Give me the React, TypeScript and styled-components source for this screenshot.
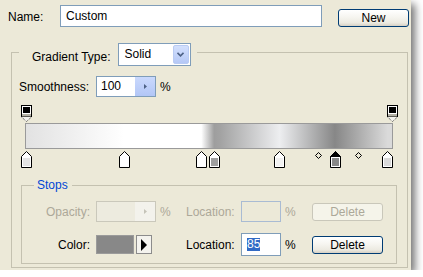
import React from 'react';
import styled, { createGlobalStyle } from 'styled-components';

const Global = createGlobalStyle`
  html, body { margin: 0; padding: 0; background: #ffffff; }
  body { font-family: 'Liberation Sans', Arial, sans-serif; font-size: 12px; }
`;

const FONT = `'Liberation Sans', Arial, sans-serif`;

const Dialog = styled.div`
  width: 411px;
  height: 270px;
  box-sizing: border-box;
  padding-top: 5px;
  background: #ece9d8;
  box-shadow: 4px 4px 8px rgba(0, 0, 0, 0.55);
  display: flex;
  flex-direction: column;
  color: #000;
  font-family: ${FONT};
  font-size: 12px;
`;

const NameRow = styled.div`
  display: flex;
  align-items: flex-start;
  height: 22px;
  padding-left: 8px;
`;

const NameLabel = styled.label`
  width: 52px;
  line-height: 22px;
  padding-top: 1px;
`;

const TextField = styled.div`
  width: 262px;
  height: 22px;
  box-sizing: border-box;
  border: 1px solid #7f9db9;
  background: #fff;
  padding-left: 5px;
  line-height: 20px;
`;

const Button = styled.div<{ $disabled?: boolean; $offset?: number }>`
  width: 71px;
  height: 18px;
  box-sizing: border-box;
  margin-left: ${p => p.$offset ?? 0}px;
  margin-top: ${p => (p.$offset ? 4 : 0)}px;
  border: 1px solid ${p => (p.$disabled ? '#c9c7ba' : '#003c74')};
  border-radius: 3px;
  background: ${p =>
    p.$disabled
      ? '#f5f4ea'
      : 'linear-gradient(#ffffff 0%, #f6f5f0 45%, #eceae1 80%, #d6d0c4 100%)'};
  color: ${p => (p.$disabled ? '#aca899' : '#000')};
  display: flex;
  align-items: center;
  justify-content: center;
  line-height: 16px;
`;

const Group = styled.fieldset`
  margin: 16px 0 0 11px;
  width: 397px;
  height: 225px;
  box-sizing: border-box;
  border: 1px solid #c4c1b0;
  padding: 0 0 0 7px;
  min-width: 0;
`;

const GroupLegend = styled.legend`
  padding: 0 6px 0 13px;
  height: 18px;
  box-sizing: border-box;
`;

const LegendRow = styled.div`
  display: flex;
  align-items: flex-start;
  height: 18px;
`;

const LegendLabel = styled.span`
  margin-top: 7px;
  line-height: 14px;
  white-space: nowrap;
`;

const Select = styled.div`
  margin-left: 7px;
  width: 73px;
  height: 23px;
  box-sizing: border-box;
  border: 1px solid #7f9db9;
  background: #fff;
  padding: 1px;
  display: flex;
  flex-shrink: 0;
`;

const SelectValue = styled.div`
  flex: 1;
  padding-left: 5px;
  line-height: 19px;
`;

const SelectButton = styled.div`
  width: 16px;
  box-sizing: border-box;
  border: 1px solid #b9cbf3;
  border-radius: 2px;
  background: linear-gradient(#d3e0fd, #b5c8f6);
  display: flex;
  align-items: center;
  justify-content: center;
`;

const SmoothRow = styled.div`
  display: flex;
  align-items: center;
  height: 21px;
  margin-top: 15px;
`;

const SmoothLabel = styled.span`
  width: 77px;
  white-space: nowrap;
`;

const Spin = styled.div<{ $disabled?: boolean }>`
  display: flex;
  width: 60px;
  height: 21px;
  box-sizing: border-box;
  border: 1px solid ${p => (p.$disabled ? '#cac8bb' : '#7f9db9')};
  background: ${p => (p.$disabled ? '#edebdf' : '#fff')};
`;

const SpinValue = styled.div`
  flex: 1;
  padding-left: 4px;
  line-height: 19px;
`;

const SpinButton = styled.div<{ $disabled?: boolean }>`
  width: 20px;
  display: flex;
  align-items: center;
  justify-content: center;
  background: ${p => (p.$disabled ? '#f3f2ec' : 'linear-gradient(#cad9fd, #b2c6f6)')};
`;

const Percent = styled.span<{ $disabled?: boolean; $width: number }>`
  width: ${p => p.$width}px;
  padding-left: 4px;
  box-sizing: border-box;
  color: ${p => (p.$disabled ? '#aca899' : '#000')};
`;

const Strip = styled.div`
  width: 381px;
  display: flex;
  flex-direction: column;
`;

const Track = styled.div<{ $top: number }>`
  position: relative;
  height: 17px;
  margin-top: ${p => p.$top}px;
`;

const Marker = styled.div`
  position: absolute;
  top: 0;
  width: 11px;
  height: 17px;
  line-height: 0;
`;

const Diamond = styled.div`
  position: absolute;
  top: 1px;
  width: 7px;
  height: 7px;
  line-height: 0;
`;

const Bar = styled.div`
  margin: 1px 0 0 6px;
  width: 368px;
  height: 26px;
  box-sizing: border-box;
  border: 1px solid #9a9a9a;
  background: linear-gradient(
    to right,
    #e2e2e2 0%,
    #ffffff 26.8%,
    #ffffff 47.9%,
    #9e9e9e 51.4%,
    #a2a2a2 53%,
    #edeef0 69.3%,
    #878787 84.4%,
    #dadada 98.8%,
    #dadada 100%
  );
`;

const StopsGroup = styled.fieldset`
  margin: 10px 0 0 2px;
  width: 376px;
  height: 86px;
  box-sizing: border-box;
  border: 1px solid #c4c1b0;
  padding: 0 0 7px 0;
  min-width: 0;
`;

const StopsLegend = styled.legend`
  margin-left: 12px;
  padding: 0 4px 0 3px;
  line-height: 14px;
  height: 14px;
  color: #0046d5;
`;

const FieldRow = styled.div<{ $top: number; $height: number }>`
  display: flex;
  align-items: center;
  margin-top: ${p => p.$top}px;
  height: ${p => p.$height}px;
`;

const FieldLabel = styled.span<{ $disabled?: boolean }>`
  width: 68px;
  margin-right: 6px;
  text-align: right;
  white-space: nowrap;
  color: ${p => (p.$disabled ? '#aca899' : '#000')};
`;

const LocationLabel = styled.span<{ $disabled?: boolean }>`
  width: 49px;
  margin-right: 6px;
  white-space: nowrap;
  color: ${p => (p.$disabled ? '#aca899' : '#000')};
`;

const LocationField = styled.div<{ $disabled?: boolean; $height: number }>`
  width: 40px;
  height: ${p => p.$height}px;
  box-sizing: border-box;
  border: 1px solid ${p => (p.$disabled ? '#a9bbd3' : '#7f9db9')};
  background: ${p => (p.$disabled ? '#ece9d8' : '#fff')};
  padding-left: 5px;
  display: flex;
  align-items: center;
`;

const Selected = styled.span`
  display: inline-block;
  background: #316ac5;
  color: #fff;
  line-height: 13px;
  height: 13px;
`;

const ColorControl = styled.div`
  display: flex;
  width: 60px;
  gap: 2px;
`;

const Swatch = styled.div<{ $color: string }>`
  width: 38px;
  height: 19px;
  box-sizing: border-box;
  border: 1px solid #9b9b9b;
  background: ${p => p.$color};
`;

const ArrowButton = styled.div`
  width: 16px;
  height: 19px;
  box-sizing: border-box;
  border: 1px solid #8c8c8c;
  background: #f4f3ee;
  display: flex;
  align-items: center;
  justify-content: center;
`;

const Chevron = () => (
  <svg width="7" height="5" viewBox="0 0 7 5">
    <path d="M0.5 0.8 L3.5 3.8 L6.5 0.8" fill="none" stroke="#4d6185" strokeWidth="1.6" />
  </svg>
);

const SmallRight = ({ color }: { color: string }) => (
  <svg width="3" height="5" viewBox="0 0 3 5">
    <path d="M0 0 L3 2.5 L0 5 Z" fill={color} />
  </svg>
);

const BigRight = () => (
  <svg width="6" height="12" viewBox="0 0 6 12">
    <path d="M0 0 L6 6 L0 12 Z" fill="#000" />
  </svg>
);

const OpacityStopIcon = () => (
  <svg width="11" height="17" viewBox="0 0 11 17">
    <rect x="0.5" y="0.5" width="10" height="11" fill="#fff" stroke="#000" />
    <rect x="2" y="2" width="7" height="6" fill="#000" />
    <rect x="1" y="9" width="9" height="2.5" fill="#b4b2a6" />
    <path d="M0.5 12 L5.5 16.5 L10.5 12" fill="#f4f3ee" stroke="#444" strokeDasharray="1 1" />
  </svg>
);

const ColorStopIcon = ({ color, selected }: { color: string; selected?: boolean }) => (
  <svg width="11" height="17" viewBox="0 0 11 17">
    <path d="M5.5 0.5 L10.5 5.5 V16.5 H0.5 V5.5 Z" fill="#fff" stroke="#000" />
    {selected && <path d="M5.5 0.5 L10.5 5.5 H0.5 Z" fill="#000" stroke="#000" />}
    <rect x="2" y="7" width="7" height="8" fill={color} />
  </svg>
);

const MidpointIcon = () => (
  <svg width="7" height="7" viewBox="0 0 7 7">
    <path d="M3.5 0.5 L6.5 3.5 L3.5 6.5 L0.5 3.5 Z" fill="none" stroke="#000" />
  </svg>
);

type Stop = { center: number; color: string; selected?: boolean };

const opacityStops = [7.5, 373];
const colorStops: Stop[] = [
  { center: 7.5, color: '#e4e4e4' },
  { center: 105, color: '#ffffff' },
  { center: 182.5, color: '#ffffff' },
  { center: 195, color: '#9e9e9e' },
  { center: 260.5, color: '#f2f2f2' },
  { center: 316, color: '#888888', selected: true },
  { center: 368.5, color: '#dadada' },
];
const midpoints = [299, 339];

export default function App() {
  return (
    <>
      <Global />
      <Dialog>
        <NameRow>
          <NameLabel>Name:</NameLabel>
          <TextField>Custom</TextField>
          <Button $offset={16}>New</Button>
        </NameRow>
        <Group>
          <GroupLegend>
            <LegendRow>
              <LegendLabel>Gradient Type:</LegendLabel>
              <Select>
                <SelectValue>Solid</SelectValue>
                <SelectButton>
                  <Chevron />
                </SelectButton>
              </Select>
            </LegendRow>
          </GroupLegend>
          <SmoothRow>
            <SmoothLabel>Smoothness:</SmoothLabel>
            <Spin>
              <SpinValue>100</SpinValue>
              <SpinButton>
                <SmallRight color="#4d6185" />
              </SpinButton>
            </Spin>
            <Percent $width={30}>%</Percent>
          </SmoothRow>
          <Strip>
            <Track $top={8}>
              {opacityStops.map(c => (
                <Marker key={c} style={{ left: c - 5.5 }}>
                  <OpacityStopIcon />
                </Marker>
              ))}
            </Track>
            <Bar />
            <Track $top={2}>
              {midpoints.map(c => (
                <Diamond key={c} style={{ left: c - 3.5 }}>
                  <MidpointIcon />
                </Diamond>
              ))}
              {colorStops.map(s => (
                <Marker key={s.center} style={{ left: s.center - 5.5 }}>
                  <ColorStopIcon color={s.color} selected={s.selected} />
                </Marker>
              ))}
            </Track>
          </Strip>
          <StopsGroup>
            <StopsLegend>Stops</StopsLegend>
            <FieldRow $top={9} $height={21}>
              <FieldLabel $disabled>Opacity:</FieldLabel>
              <Spin $disabled>
                <SpinValue />
                <SpinButton $disabled>
                  <SmallRight color="#c5c3b8" />
                </SpinButton>
              </Spin>
              <Percent $disabled $width={30}>%</Percent>
              <LocationLabel $disabled>Location:</LocationLabel>
              <LocationField $disabled $height={21} />
              <Percent $disabled $width={31}>%</Percent>
              <Button $disabled>Delete</Button>
            </FieldRow>
            <FieldRow $top={11} $height={23}>
              <FieldLabel>Color:</FieldLabel>
              <ColorControl>
                <Swatch $color="#888888" />
                <ArrowButton>
                  <BigRight />
                </ArrowButton>
              </ColorControl>
              <Percent $width={30} />
              <LocationLabel>Location:</LocationLabel>
              <LocationField $height={23}>
                <Selected>85</Selected>
              </LocationField>
              <Percent $width={31}>%</Percent>
              <Button>Delete</Button>
            </FieldRow>
          </StopsGroup>
        </Group>
      </Dialog>
    </>
  );
}
